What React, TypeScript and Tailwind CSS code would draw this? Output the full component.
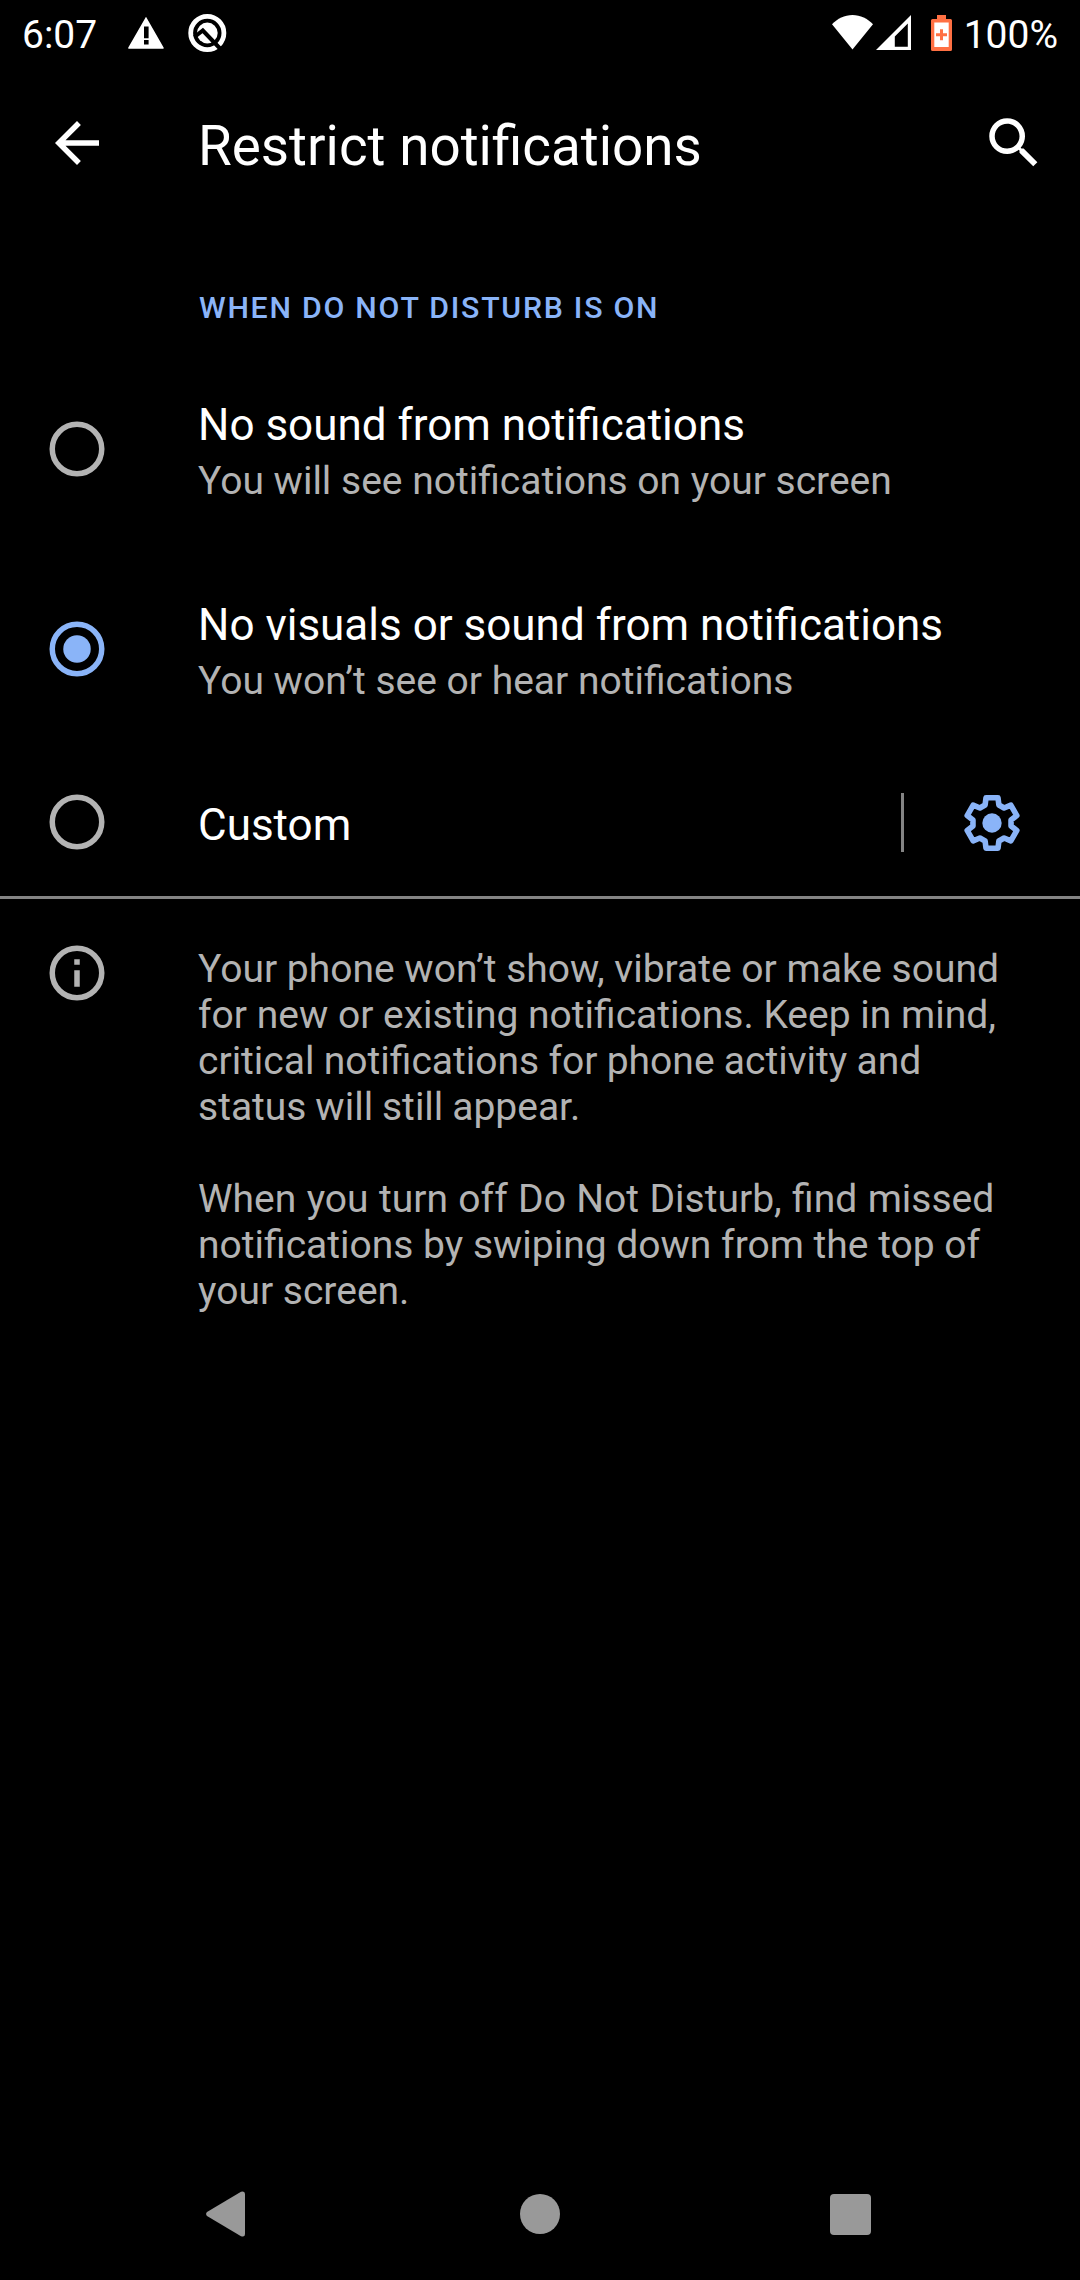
import React from 'react';

const ACCENT = '#8ab4f8';

function gearPath() {
  const tooth: [number, number][] = [
    [-6.9, -18],
    [-6, -25.2],
    [6, -25.2],
    [6.9, -18],
  ];
  const points: string[] = [];
  for (let i = 0; i < 6; i++) {
    const a = (i * Math.PI) / 3;
    for (const [x, y] of tooth) {
      const px = x * Math.cos(a) - y * Math.sin(a);
      const py = x * Math.sin(a) + y * Math.cos(a);
      points.push(`${px.toFixed(2)} ${py.toFixed(2)}`);
    }
  }
  return `M${points.join('L')}Z`;
}

function Gear() {
  return (
    <svg className="size-[66px]" viewBox="-33 -33 66 66">
      <path d={gearPath()} fill="none" stroke={ACCENT} strokeWidth="5.6" strokeLinejoin="round" />
      <circle r="9.7" fill={ACCENT} />
    </svg>
  );
}

function Radio({ checked = false }: { checked?: boolean }) {
  return (
    <svg
      className={checked ? 'size-[66px] text-[#8ab4f8]' : 'size-[66px] text-[#b3b3b3]'}
      viewBox="0 0 24 24"
    >
      <circle cx="12" cy="12" r="9" fill="none" stroke="currentColor" strokeWidth="2" />
      {checked && <circle cx="12" cy="12" r="5" fill="currentColor" />}
    </svg>
  );
}

function StatusBar() {
  return (
    <div className="flex h-[66px] items-start text-[39px] leading-[46px] text-white">
      <span className="ml-[22px] mt-[12px] w-[105px]">6:07</span>
      <svg className="mt-[16px] h-[33px] w-[38px]" viewBox="0 0 38 33">
        <path d="M19 .8 36.6 31.6a.8.8 0 0 1-.7 1.2H2a.8.8 0 0 1-.7-1.2Z" fill="#fff" />
        <path d="M17 10.5h4.6v11.7H17zM17 24h4.6v4.5H17z" fill="#000" />
      </svg>
      <svg className="ml-[22px] mt-[13px] size-[40px]" viewBox="0 0 40 40">
        <circle cx="20.3" cy="20" r="16.6" fill="none" stroke="#fff" strokeWidth="4.8" />
        <circle cx="20.3" cy="20" r="10.4" fill="#fff" />
        <path d="M7.500 24 15.800 17.500 34 36.500" fill="none" stroke="#000" strokeWidth="4" />
      </svg>
      <div className="ml-auto flex">
        <svg className="mt-[15px] h-[35px] w-[41px]" viewBox="0 0 41 35">
          <path d="M20.5 34.5 0 9.3C5.500 3.500 12.500 0 20.500 0S35.500 3.500 41 9.300Z" fill="#fff" />
        </svg>
        <svg className="ml-[3px] mt-[15px] size-[35px]" viewBox="0 0 35 35">
          <path d="M35 0v35H0ZM31.800 8.500 18.800 21.500v10.300h13Z" fill="#fff" fillRule="evenodd" />
        </svg>
        <svg className="ml-[20px] mt-[15px] h-[36px] w-[21px]" viewBox="0 0 21 36">
          <path
            d="M6 0h9v4h4.500A1.500 1.500 0 0 1 21 5.500v29a1.500 1.500 0 0 1-1.500 1.500h-18A1.500 1.500 0 0 1 0 34.500v-29A1.500 1.500 0 0 1 1.500 4H6Z"
            fill="#ff7043"
          />
          <path d="M3.300 7.500h14.400v24.500H3.300z" fill="#fff" />
          <path d="M9 14.300h3v4h4v3h-4v4H9v-4H5v-3h4z" fill="#ff7043" />
        </svg>
        <span className="ml-[12px] mr-[22px] mt-[12px]">100%</span>
      </div>
    </div>
  );
}

function Option({
  title,
  summary,
  checked,
}: {
  title: string;
  summary: string;
  checked?: boolean;
}) {
  return (
    <div className="flex h-[200px] items-center pl-[44px]">
      <Radio checked={checked} />
      <div className="ml-[88px] flex flex-col gap-[7px] pt-[4px]">
        <div className="text-[44px] leading-[52px] text-white">{title}</div>
        <div className="text-[39px] leading-[46px]">{summary}</div>
      </div>
    </div>
  );
}

export default function App() {
  return (
    <div className="flex h-[2280px] w-[1080px] flex-col overflow-hidden whitespace-nowrap bg-black font-['Roboto',sans-serif] text-[#b3b3b3]">
      <StatusBar />
      <header className="flex h-[154px] items-center px-[44px] pr-[33px] text-white">
        <svg className="size-[66px]" viewBox="0 0 24 24" fill="currentColor">
          <path d="M20 11H7.830l5.590-5.590L12 4l-8 8 8 8 1.410-1.410L7.830 13H20v-2z" />
        </svg>
        <h1 className="ml-[88px] mt-[6px] text-[54.800px] leading-[64px]">Restrict notifications</h1>
        <svg className="ml-auto size-[66px]" viewBox="0 0 24 24" fill="currentColor">
          <path d="M15.500 14h-.79l-.28-.27A6.471 6.471 0 0 0 16 9.500 6.500 6.500 0 1 0 9.500 16c1.610 0 3.090-.59 4.230-1.570l.27.28v.79l5 4.990L20.490 19l-4.990-5zm-6 0C7.010 14 5 11.990 5 9.500S7.010 5 9.500 5 14 7.010 14 9.500 11.990 14 9.500 14z" />
        </svg>
      </header>
      <main className="flex flex-1 flex-col">
        <h2 className="h-[129px] pl-[199px] pt-[70px] text-[30.250px] font-medium leading-[36px] tracking-[1.760px] text-[#8ab4f8]">
          WHEN DO NOT DISTURB IS ON
        </h2>
        <Option title="No sound from notifications" summary="You will see notifications on your screen" />
        <Option
          title="No visuals or sound from notifications"
          summary="You won’t see or hear notifications"
          checked
        />
        <div className="flex h-[147px] items-center pb-px pl-[44px]">
          <Radio />
          <div className="ml-[88px] mt-[5px] text-[44px] leading-[52px] text-white">Custom</div>
          <div className="ml-auto h-[59px] w-[3px] bg-[#848484]" />
          <div className="ml-[55px] mr-[55px] mt-px">
            <Gear />
          </div>
        </div>
        <div className="h-[3px] bg-[#848484]" />
        <div className="flex pl-[44px] pt-[41px]">
          <svg className="size-[66px]" viewBox="0 0 24 24">
            <circle cx="12" cy="12" r="9" fill="none" stroke="currentColor" strokeWidth="2" />
            <path d="M11 7h2v2h-2zM11 11h2v6h-2z" fill="currentColor" />
          </svg>
          <div className="ml-[88px] mt-[6px] text-[39px] leading-[46px]">
            <p>
              Your phone won’t show, vibrate or make sound
              <br />
              for new or existing notifications. Keep in mind,
              <br />
              <span className="[word-spacing:-0.4px]">critical notifications for phone activity and</span>
              <br />
              <span className="[word-spacing:-0.8px]">status will still appear.</span>
            </p>
            <p className="mt-[46px]">
              <span className="[word-spacing:0.7px]">When you turn off Do Not Disturb, find missed</span>
              <br />
              notifications by swiping down from the top of
              <br />
              your screen.
            </p>
          </div>
        </div>
      </main>
      <nav className="flex h-[132px] items-center pl-[206px] text-[#999999]">
        <svg className="h-[46px] w-[39px]" viewBox="0 0 39 46" fill="currentColor">
          <path d="M1 21 35 .8Q39 -.5 39 3V43Q39 46.500 35 45.200L1 25Q-.8 23 1 21Z" />
        </svg>
        <div className="ml-[275px] size-[40px] rounded-full bg-[#999999]" />
        <div className="ml-[270px] size-[41px] rounded-[4px] bg-[#999999]" />
      </nav>
    </div>
  );
}
